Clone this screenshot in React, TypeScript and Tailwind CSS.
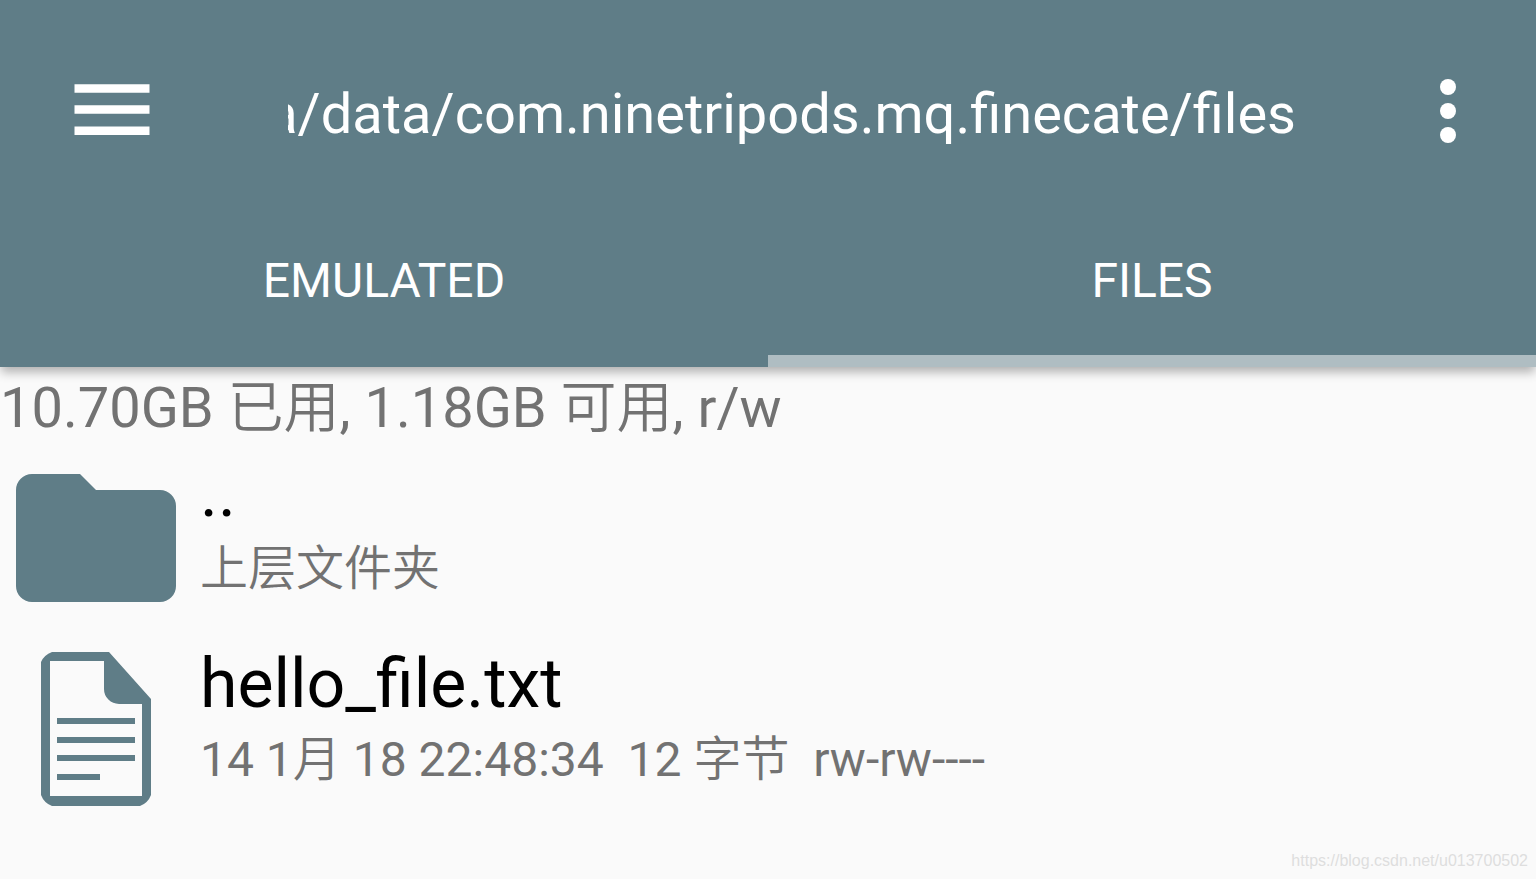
import React from "react";

type Entry = {
  name: string;
  details: string;
  kind: "folder" | "document";
};

const entries: Entry[] = [
  { name: "..", details: "上层文件夹", kind: "folder" },
  {
    name: "hello_file.txt",
    details: "14 1月 18 22:48:34  12 字节  rw-rw----",
    kind: "document",
  },
];

function MenuIcon() {
  return (
    <svg width="76" height="52" viewBox="0 0 76 52" fill="currentColor" aria-hidden="true">
      <path d="M.5 .3h75v8.400h-75zM.5 21.300h75v8.400h-75zM.5 42.600h75v8.400h-75z" />
    </svg>
  );
}

function MoreIcon() {
  return (
    <svg width="16" height="64" viewBox="0 0 16 64" fill="currentColor" aria-hidden="true">
      <circle cx="8" cy="8" r="8" />
      <circle cx="8" cy="32" r="8" />
      <circle cx="8" cy="56" r="8" />
    </svg>
  );
}

function FolderIcon() {
  return (
    <svg width="160" height="128" viewBox="0 0 160 128" fill="currentColor" aria-hidden="true">
      <path d="M16 0h48l16 16h64a16 16 0 0 1 16 16v80a16 16 0 0 1-16 16H16a16 16 0 0 1-16-16V16A16 16 0 0 1 16 0z" />
    </svg>
  );
}

function DocumentIcon() {
  return (
    <svg width="110" height="154" viewBox="0 0 110 154" fill="currentColor" aria-hidden="true">
      <path
        fillRule="evenodd"
        d="M11 0h57l42 47v96q-3 8-11 11H11q-8-3-11-11V10Q3 3 11 0zM9 9v135h92V52H78a15 15 0 0 1-15-15V9z"
      />
      <path d="M16 66h78v6H16zM16 85h78v6H16zM16 103h78v6H16zM16 122h43v6H16z" />
    </svg>
  );
}

export default function App() {
  return (
    <div className="flex min-h-screen flex-col bg-[#fafafa] font-[Roboto,'Noto_Sans_CJK_SC_DemiLight','Noto_Sans_CJK_SC',sans-serif] text-[#727272]">
      <header className="bg-[#5f7d87] text-white shadow-[0_6px_10px_-1px_rgba(0,0,0,0.3)]">
        <div className="flex h-48 items-center pt-8">
          <button type="button" aria-label="Menu" className="flex w-56 shrink-0 justify-center pb-1">
            <MenuIcon />
          </button>
          <h1 className="ml-16 flex min-w-0 flex-1 justify-end overflow-hidden pt-1 text-[56px] leading-16 whitespace-nowrap">
            a/data/com.ninetripods.mq.finecate/files
          </h1>
          <button type="button" aria-label="More options" className="ml-16 flex w-44 shrink-0 justify-center pb-0.5">
            <MoreIcon />
          </button>
        </div>
        <nav className="grid h-[175px] grid-cols-2 text-5xl">
          <button type="button" className="border-b-12 border-transparent pt-3.5">
            EMULATED
          </button>
          <button type="button" aria-current="page" className="border-b-12 border-[#afbdc2] pt-3.5">
            FILES
          </button>
        </nav>
      </header>
      <main className="flex-1">
        <p className="pt-2 text-[56px] leading-[67px]">10.70GB 已用, 1.18GB 可用, r/w</p>
        <ul>
          {entries.map((entry) => (
            <li key={entry.name}>
              <a href="#" className="flex h-[191px] items-center">
                <span className="flex w-48 shrink-0 justify-center text-[#5f7d87]">
                  {entry.kind === "folder" ? <FolderIcon /> : <DocumentIcon />}
                </span>
                <span className="flex flex-col pb-[18px] pl-2">
                  <span className="text-[68px] leading-20 text-black">{entry.name}</span>
                  <span className="text-5xl leading-18 whitespace-pre">{entry.details}</span>
                </span>
              </a>
            </li>
          ))}
        </ul>
      </main>
      <footer className="px-2 pb-2 text-right font-['Liberation_Sans',sans-serif] text-base leading-5 text-[#dedede]">
        https://blog.csdn.net/u013700502
      </footer>
    </div>
  );
}
